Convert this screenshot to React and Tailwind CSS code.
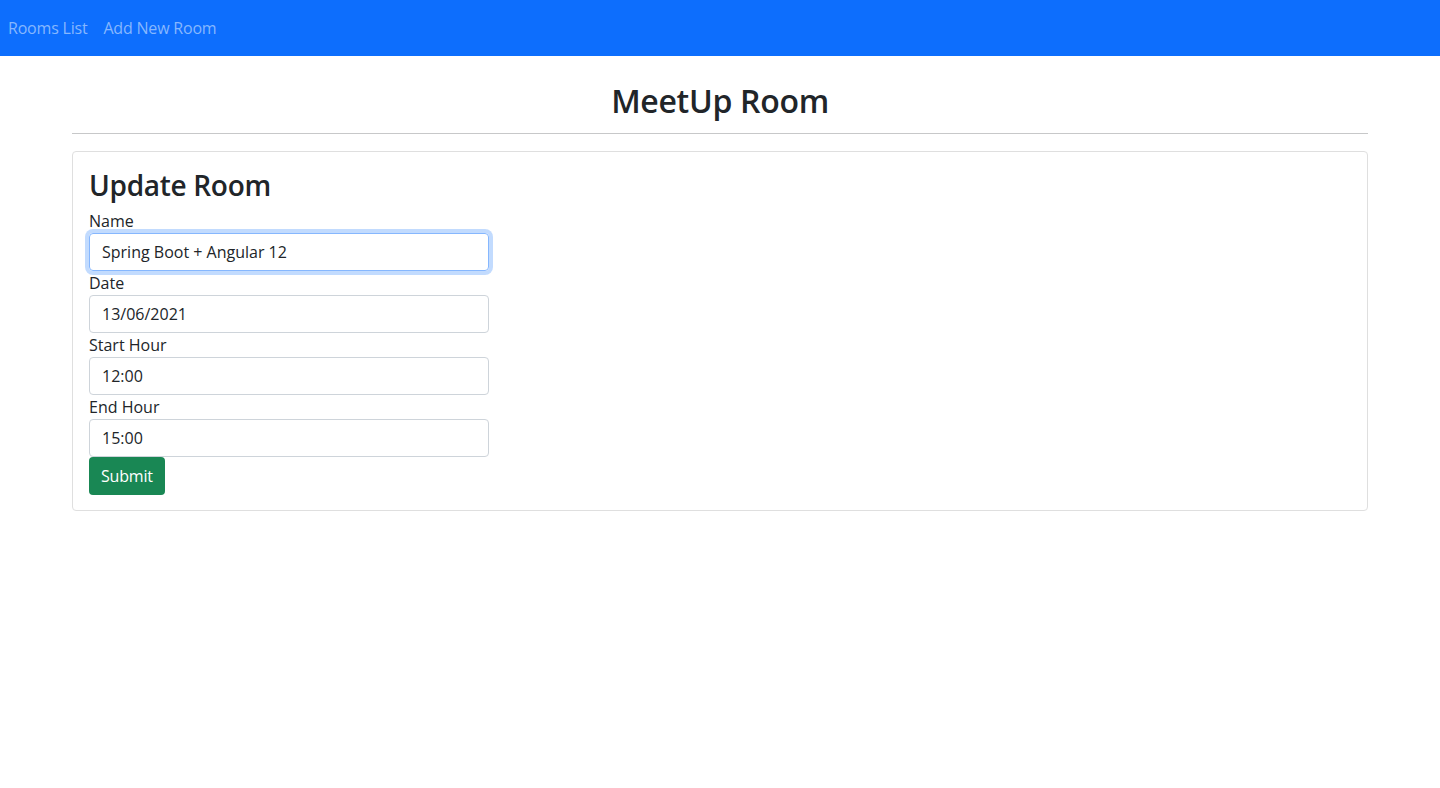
import React, { useState } from 'react';

const fields = [
  { label: 'Name', value: 'Spring Boot + Angular 12', focused: true },
  { label: 'Date', value: '13/06/2021' },
  { label: 'Start Hour', value: '12:00' },
  { label: 'End Hour', value: '15:00' },
];

export default function App() {
  const [values, setValues] = useState(fields.map((f) => f.value));

  return (
    <div className="min-h-screen bg-white text-[#212529] font-['Segoe_UI','Open_Sans',sans-serif] text-base">
      {/* Navbar */}
      <nav className="h-14 bg-[#0d6efd] flex items-center px-2 tracking-[-0.2px]">
        <a href="#" className="text-[#86b7fe] leading-6">Rooms List</a>
        <a href="#" className="text-[#86b7fe] leading-6 ml-4">Add New Room</a>
      </nav>

      <div className="max-w-[1320px] mx-auto px-3">
        <h2 className="text-[32px] leading-[38px] font-[550] text-center pt-[26px] pb-[13px] tracking-[-0.3px]">MeetUp Room</h2>
        <hr className="border-t border-[#c7c8c9]" />

        <div className="mt-[17px] border border-[#dfdfdf] rounded pt-4 px-4 pb-[15px]">
          <h3 className="text-[28px] leading-[34px] font-[550] mb-[7px] tracking-[-0.3px]">Update Room</h3>
          <form onSubmit={(e) => e.preventDefault()}>
            {fields.map((f, i) => (
              <div key={f.label}>
                <label className="block leading-6">{f.label}</label>
                <input
                  type="text"
                  value={values[i]}
                  autoFocus={f.focused}
                  onChange={(e) => {
                    const next = [...values];
                    next[i] = e.target.value;
                    setValues(next);
                  }}
                  className={
                    f.focused
                      ? 'block w-[400px] h-[38px] px-3 rounded border border-[#86b7fe] shadow-[0_0_0_4px_rgba(13,110,253,0.25)] outline-none'
                      : 'block w-[400px] h-[38px] px-3 rounded border border-[#ced4da] outline-none'
                  }
                />
              </div>
            ))}
            <button type="submit" className="h-[38px] px-3 rounded bg-[#198754] text-white leading-6 tracking-[-0.2px]">
              Submit
            </button>
          </form>
        </div>
      </div>
    </div>
  );
}
